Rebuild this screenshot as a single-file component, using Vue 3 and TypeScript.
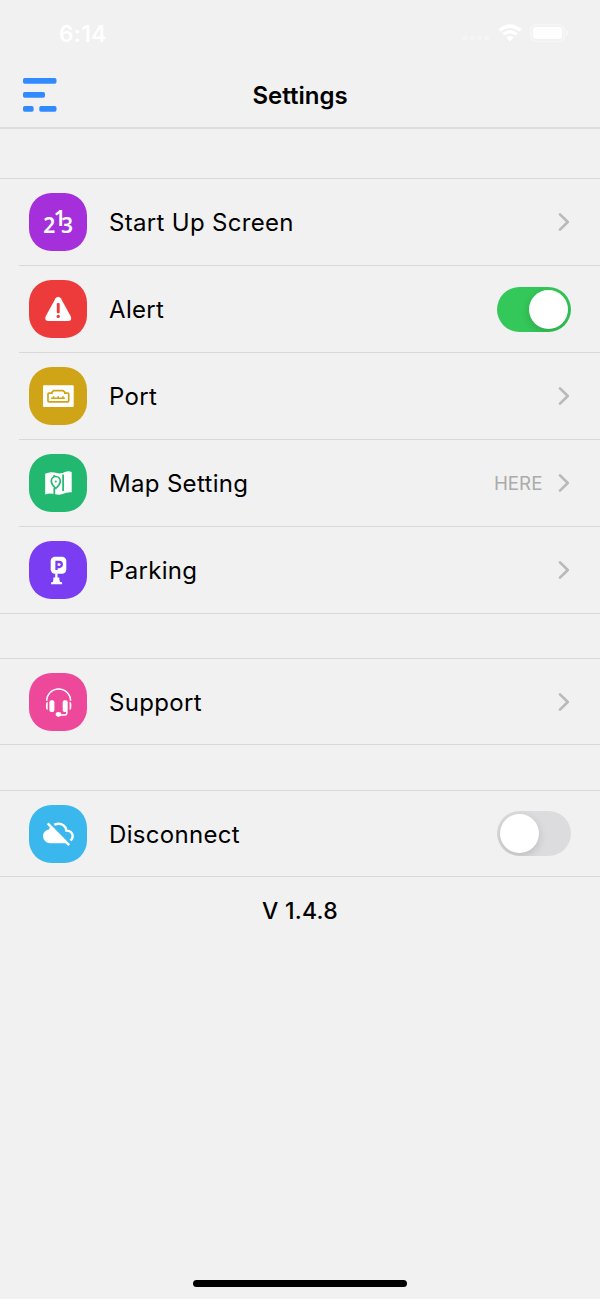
<script setup lang="ts">
import { reactive } from 'vue'

type IconName = 'startup' | 'alert' | 'port' | 'map' | 'parking' | 'support' | 'disconnect'

interface Item {
  icon: IconName
  label: string
  kind: 'link' | 'toggle'
  value?: string
  on?: boolean
}

const groups = reactive<Item[][]>([
  [
    { icon: 'startup', label: 'Start Up Screen', kind: 'link' },
    { icon: 'alert', label: 'Alert', kind: 'toggle', on: true },
    { icon: 'port', label: 'Port', kind: 'link' },
    { icon: 'map', label: 'Map Setting', kind: 'link', value: 'HERE' },
    { icon: 'parking', label: 'Parking', kind: 'link' },
  ],
  [{ icon: 'support', label: 'Support', kind: 'link' }],
  [{ icon: 'disconnect', label: 'Disconnect', kind: 'toggle', on: false }],
])
</script>

<template>
  <div class="screen">
    <div class="status">
      <span class="time">6:14</span>
      <div class="indicators">
        <svg class="signal" width="28" height="6" viewBox="0 0 28 6">
          <circle v-for="n in 4" :key="n" :cx="n * 7.2 - 4.2" cy="3" r="2.6" />
        </svg>
        <svg class="wifi" width="24" height="18" viewBox="0 0 24 18">
          <path d="M.5 5.2Q12-4.5 23.500 5.200L21.200 7.700Q12 .2 2.800 7.700Z" />
          <path d="M4.400 9.300Q12 2.900 19.600 9.300L17.300 11.700Q12 7.400 6.700 11.700Z" />
          <path d="M8.200 13.300Q12 10.100 15.800 13.300L12 17.500Z" />
        </svg>
        <svg class="battery" width="39" height="18" viewBox="0 0 39 18">
          <rect class="shell" x=".8" y=".8" width="33.600" height="16.400" rx="5" />
          <rect x="3" y="3" width="29.200" height="12" rx="3" />
          <path class="cap" d="M36.200 6Q38.500 7.200 38.500 9T36.200 12Z" />
        </svg>
      </div>
    </div>

    <header class="navbar">
      <button class="menu" aria-label="Menu">
        <svg width="34" height="34" viewBox="0 0 34 34">
          <rect x="0" y="0" width="33.500" height="5.800" rx="1.700" />
          <rect x="0" y="14" width="22" height="5.800" rx="1.700" />
          <rect x="0" y="28" width="10.600" height="5.800" rx="1.700" />
          <rect x="16.300" y="28" width="17.200" height="5.800" rx="1.700" />
        </svg>
      </button>
      <h1>Settings</h1>
    </header>

    <main>
      <section v-for="(group, g) in groups" :key="g" class="group" :class="{ single: group.length === 1 }">
        <div v-for="item in group" :key="item.label" class="row">
          <span class="tile" :class="item.icon">
            <svg width="58" height="58" viewBox="0 0 58 58">
              <text v-if="item.icon === 'startup'" class="digits" x="14.300 24.800 32.100" y="40.300 32.700 40.300">213</text>
              <g v-else-if="item.icon === 'alert'">
                <path class="w" d="M26.600 18.300Q29.200 15 31.800 18.300L41.800 36.500Q43.200 40.800 39.200 41H19.200Q15.200 40.800 16.600 36.500Z" />
                <rect class="c" x="27.800" y="23" width="2.900" height="10.300" rx="1" />
                <circle class="c" cx="29.250" cy="36.400" r="1.700" />
              </g>
              <g v-else-if="item.icon === 'port'">
                <rect class="w" x="14" y="18.300" width="30.700" height="21.600" rx="1" />
                <path class="line" d="M19.800 34.900Q19 34.900 19 34.100V27Q19 26.200 19.800 26.200H23V25.200L24.700 23.600H34L35.800 25.200V26.200H38.900Q39.700 26.200 39.700 27V34.100Q39.700 34.900 38.900 34.900Z" />
                <path class="line thin" d="M22 31.200H36M24.500 31V29.200M29.200 31V29.200M33.900 31V29.200" />
              </g>
              <g v-else-if="item.icon === 'map'">
                <path class="w" d="M16.200 19.700Q20.500 17.300 25.400 18.600Q29.600 20 33.700 19Q38.200 16.400 42.700 17.900V38.300Q38.200 37.800 33.700 40Q29.600 41.500 25.400 40Q20.800 38.700 16.200 40.500Z" />
                <path class="line" d="M34.100 20.500V37M25.300 21V24M25.300 34V40" />
                <path class="w line" d="M26.800 34.400Q22.300 30.500 22.300 27A4.500 4.500 0 0 1 31.300 27Q31.300 30.500 26.800 34.400Z" />
                <circle class="c" cx="26.800" cy="27.400" r="1" />
              </g>
              <g v-else-if="item.icon === 'parking'">
                <rect class="w" x="21.700" y="15.700" width="15.600" height="17" rx="4.200" />
                <path class="letter" d="M27.500 29V21H30.300A2.400 2.400 0 0 1 30.300 26H27.500" />
                <path class="w" d="M26.200 32.500H28.500V36.500H30.300V38L31 41H32.300Q33.200 41 33.200 43.200H22Q22 41 23 41H24L24.400 38V36.500H26.200Z" />
              </g>
              <g v-else-if="item.icon === 'support'">
                <path class="stroke" d="M17.700 27.700A11.700 11.400 0 0 1 41.600 27.700" />
                <rect class="w" x="20.400" y="27.300" width="5" height="11.600" rx="1.900" />
                <rect class="w" x="33.700" y="27.300" width="5" height="11.600" rx="1.900" />
                <path class="w" d="M18.700 28.700V37.100Q17 36.500 17 34.700V31Q17 29.200 18.700 28.700ZM40.600 28.700V37.100Q42.300 36.500 42.300 34.700V31Q42.300 29.200 40.600 28.700Z" />
                <path class="stroke thin" d="M37.800 38V40Q37.800 41.900 35.900 41.900H30" />
                <ellipse class="w" cx="29.500" cy="41.300" rx="2.800" ry="2.400" />
              </g>
              <g v-else>
                <path class="w" d="M20.800 21.300L38 38.200H21.200A7.200 7.200 0 0 1 14 31.200Q14 25.500 20.400 24.200Z" />
                <path class="stroke cloud" d="M25.300 19.700Q30.500 17.500 34.400 20.200Q37.100 22.100 37.400 25.600Q42.700 26 43.600 30.200Q44.100 33.300 41.500 35.700" />
                <path class="stroke cloud" d="M18.700 18.300L40.200 40.200" />
              </g>
            </svg>
          </span>
          <span class="label">{{ item.label }}</span>
          <span v-if="item.value" class="value">{{ item.value }}</span>
          <svg v-if="item.kind === 'link'" class="chevron" width="14" height="20" viewBox="0 0 14 20">
            <path d="M3 2.400L10.800 10L3 17.600" />
          </svg>
          <button
            v-else
            class="switch"
            :class="{ on: item.on }"
            role="switch"
            :aria-checked="item.on"
            :aria-label="item.label"
            @click="item.on = !item.on"
          >
            <span class="knob"></span>
          </button>
        </div>
      </section>
      <p class="version">V 1.4.8</p>
    </main>

    <div class="home"></div>
  </div>
</template>

<style>
body {
  background: #f1f1f1;
}
</style>

<style scoped>
.screen {
  box-sizing: border-box;
  width: 600px;
  height: 1299px;
  display: flex;
  flex-direction: column;
  background: #f1f1f1;
  color: #000;
  font-family: Inter, "Liberation Sans", sans-serif;
  overflow: hidden;
}
button {
  border: 0;
  padding: 0;
  background: none;
}
.status {
  display: flex;
  justify-content: space-between;
  align-items: center;
  height: 66px;
  padding: 0 31px 0 59px;
  box-sizing: border-box;
  color: #fff;
}
.time {
  font-size: 22.500px;
  font-weight: 600;
  letter-spacing: 0.400px;
}
.indicators {
  display: flex;
  align-items: center;
  fill: #fff;
}
.signal {
  margin: 10px 8px 0 0;
  opacity: 0.3;
}
.wifi {
  margin-right: 8px;
}
.shell {
  fill: none;
  stroke: #fff;
  stroke-width: 1.500;
  opacity: 0.4;
}
.cap {
  opacity: 0.5;
}
.navbar {
  box-sizing: border-box;
  height: 63px;
  display: grid;
  grid-template-columns: 100px 1fr 100px;
  align-items: center;
  border-bottom: 2px solid #dedede;
}
.menu {
  width: 34px;
  height: 34px;
  margin: -3px 0 0 22.500px;
}
.menu svg {
  display: block;
  fill: #318aff;
}
h1 {
  margin: -1px 0 0;
  text-align: center;
  font-size: 24px;
  font-weight: 600;
  line-height: 30px;
}
main {
  padding-top: 49px;
}
.group {
  border-top: 1px solid #d8d8d8;
  border-bottom: 1px solid #d8d8d8;
  margin-bottom: 44px;
}
.group.single {
  margin-bottom: 45px;
}
.row {
  position: relative;
  display: flex;
  align-items: center;
  height: 86px;
  padding: 0 29px;
}
.single .row {
  height: 85px;
}
.row + .row {
  margin-top: 1px;
}
.row + .row::before {
  content: "";
  position: absolute;
  top: -1px;
  left: 19px;
  right: 0;
  height: 1px;
  background: #d8d8d8;
}
.tile {
  --tint: #000;
  width: 58px;
  height: 58px;
  border-radius: 22.500px;
  background: var(--tint);
  flex: none;
}
.tile svg {
  display: block;
}
.startup { --tint: #a52fda; }
.alert { --tint: #ed3b3b; }
.port { --tint: #cfa517; }
.map { --tint: #22b870; }
.parking { --tint: #7b3df1; }
.support { --tint: #ed4899; }
.disconnect { --tint: #3ab7ec; }
.digits {
  fill: #fff;
  font-family: "Noto Sans", Inter, sans-serif;
  font-size: 21px;
  font-weight: 600;
}
.c {
  fill: var(--tint);
}
.line {
  fill: none;
  stroke: var(--tint);
  stroke-width: 1.700;
}
.w {
  fill: #fff;
}
.line.thin {
  stroke-width: 1.600;
}
.letter {
  fill: none;
  stroke: var(--tint);
  stroke-width: 2.300;
}
.stroke {
  fill: none;
  stroke: #fff;
  stroke-width: 1.600;
}
.stroke.thin {
  stroke-width: 1.500;
}
.stroke.cloud {
  stroke-width: 2.400;
}
.label {
  flex: 1;
  margin-left: 22px;
  padding-top: 2px;
  font-size: 24px;
  line-height: 30px;
  letter-spacing: 0.320px;
}
.single .label {
  padding-top: 3px;
}
.value {
  margin-right: 14.500px;
  color: #ababab;
  font-size: 18.800px;
}
.chevron {
  margin-right: 0;
}
.chevron path {
  fill: none;
  stroke: #b9b9b9;
  stroke-width: 2.600;
  stroke-linecap: round;
  stroke-linejoin: round;
}
.switch {
  box-sizing: border-box;
  width: 74px;
  height: 45px;
  padding: 3px;
  display: flex;
  align-items: center;
  border-radius: 23px;
  background: #dcdcde;
  overflow: hidden;
}
.switch.on {
  justify-content: flex-end;
  background: #34c759;
}
.knob {
  width: 39px;
  height: 39px;
  border-radius: 50%;
  background: #fff;
  box-shadow: 0 3px 9px rgba(0, 0, 0, 0.15);
}
.version {
  margin: -26px 0 0;
  text-align: center;
  font-size: 23px;
  font-weight: 500;
  line-height: 30px;
  letter-spacing: 0.250px;
}
.home {
  width: 214px;
  height: 7px;
  margin: auto auto 12px;
  border-radius: 4px;
  background: #000;
}
</style>
